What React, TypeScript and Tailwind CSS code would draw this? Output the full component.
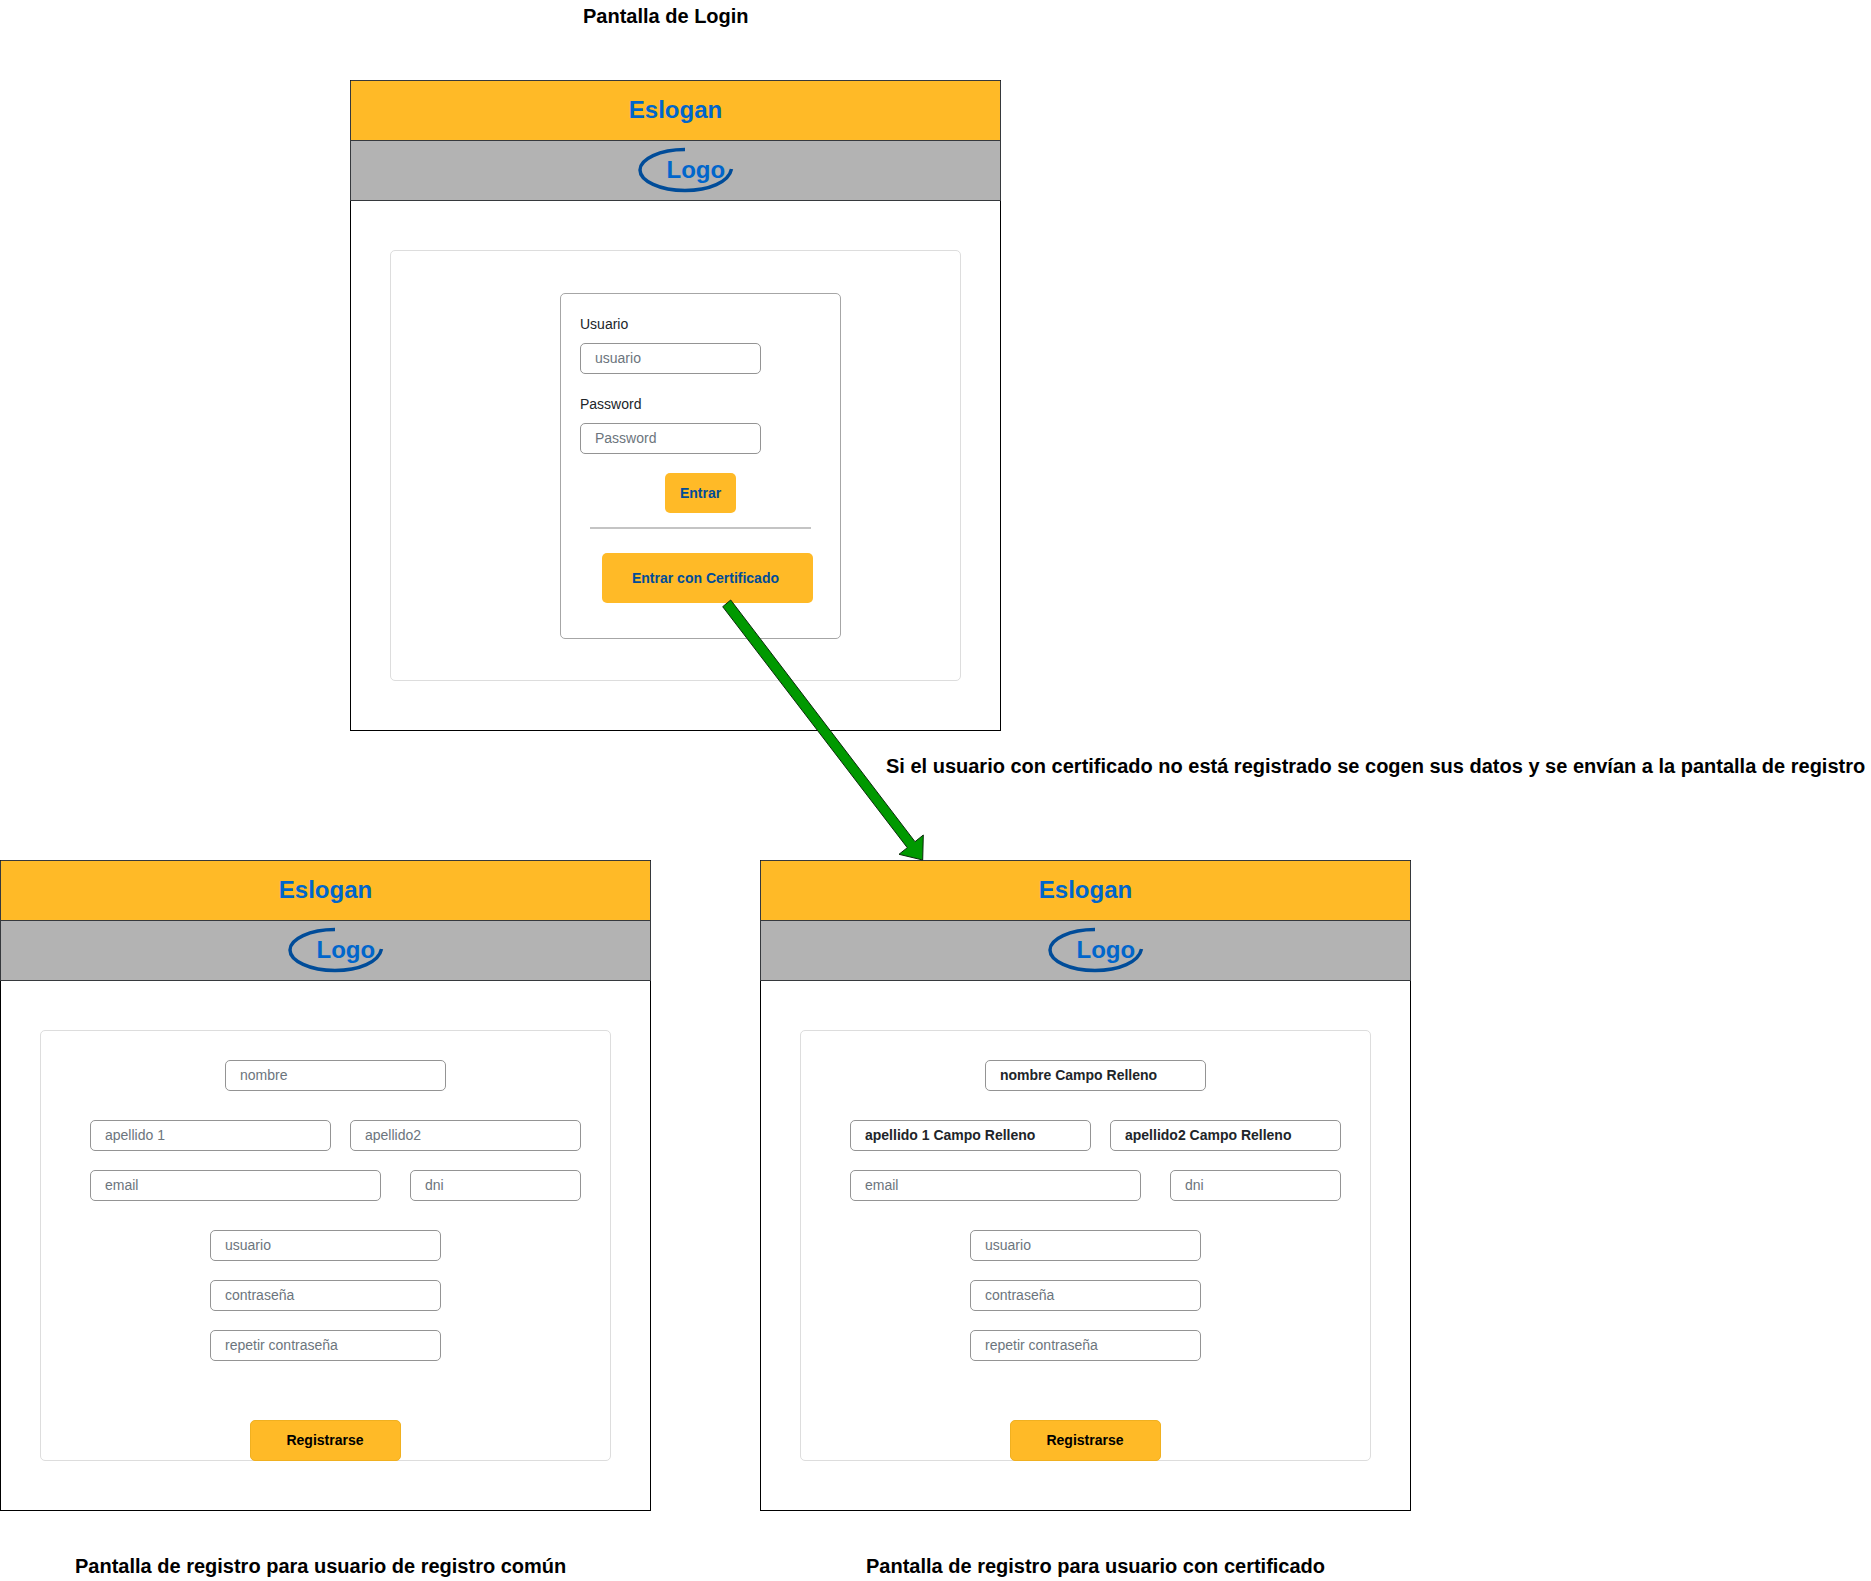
import React from "react";

const inputClass =
  "block h-[31px] box-border rounded-[5px] border border-[#949494] bg-white pl-[14px] pr-2 pb-[2px] text-[14px] leading-[21px] text-[#212529] font-bold outline-none placeholder:font-normal placeholder:text-[#6c757d]";

function Field({ w, placeholder, value }: { w: string; placeholder?: string; value?: string }) {
  return <input readOnly className={`${inputClass} ${w}`} placeholder={placeholder} defaultValue={value} />;
}

function Logo() {
  return (
    <div className="relative flex h-full w-[120px] items-center pb-[2px]">
      <svg className="absolute left-0 top-0 h-[59px] w-[120px]" viewBox="0 0 120 59" fill="none">
        <path d="M 52 8.5 C 27 8.5 7 18 7 29 C 7 40 27 49.5 52 49.5 C 76 49.5 96 41 98.5 28" stroke="#004c99" strokeWidth="3.5" />
      </svg>
      <span className="relative ml-[34px] text-[24px] font-bold leading-none text-[#0066cc]">Logo</span>
    </div>
  );
}

function Card({ children }: { children: React.ReactNode }) {
  return (
    <div className="box-border h-[651px] w-[651px] border border-black border-t-[#36393d] bg-white">
      <div className="-mx-px box-border flex h-[60px] items-center justify-center border-x border-b border-[#36393d] bg-[#ffba27] pb-[2px] text-[24px] font-bold text-[#0066cc]">
        Eslogan
      </div>
      <div className="-mx-px box-border flex h-[60px] justify-center border-x border-b border-[#36393d] bg-[#b3b3b3] pl-[34px]">
        <Logo />
      </div>
      <div className="ml-[39px] mt-[49px] box-border h-[431px] w-[571px] rounded-[5px] border border-[#dddddd]">
        {children}
      </div>
    </div>
  );
}

function LoginForm() {
  return (
    <div className="ml-[169px] mt-[42px] box-border h-[346px] w-[281px] rounded-[5px] border border-[#a6a6a6] pl-[19px] pt-[20px]">
      <div className="mb-[8px] text-[14px] leading-[21px] text-[#212529]">Usuario</div>
      <Field w="w-[181px]" placeholder="usuario" />
      <div className="mb-[8px] mt-[20px] text-[14px] leading-[21px] text-[#212529]">Password</div>
      <Field w="w-[181px]" placeholder="Password" />
      <div className="ml-[85px] mt-[19px] flex h-[40px] w-[71px] items-center justify-center rounded-[5px] bg-[#ffba27] text-[14px] font-bold text-[#004c99]">
        Entrar
      </div>
      <div className="ml-[10px] mt-[14px] h-[2px] w-[221px] bg-[#c4c4c4]" />
      <div className="ml-[22px] mt-[24px] flex h-[50px] w-[211px] items-center justify-center rounded-[5px] bg-[#ffba27] pr-[4px] text-[14px] font-bold text-[#004c99]">
        Entrar con Certificado
      </div>
    </div>
  );
}

function RegisterForm({ filled }: { filled?: boolean }) {
  return (
    <div className="pt-[29px]">
      <div className="ml-[184px]">
        <Field w="w-[221px]" placeholder="nombre" value={filled ? "nombre Campo Relleno" : undefined} />
      </div>
      <div className="ml-[49px] mt-[29px] flex gap-[19px]">
        <Field w="w-[241px]" placeholder="apellido 1" value={filled ? "apellido 1 Campo Relleno" : undefined} />
        <Field w="w-[231px]" placeholder="apellido2" value={filled ? "apellido2 Campo Relleno" : undefined} />
      </div>
      <div className="ml-[49px] mt-[19px] flex gap-[29px]">
        <Field w="w-[291px]" placeholder="email" />
        <Field w="w-[171px]" placeholder="dni" />
      </div>
      <div className="ml-[169px] mt-[29px] flex flex-col gap-[19px]">
        <Field w="w-[231px]" placeholder="usuario" />
        <Field w="w-[231px]" placeholder="contraseña" />
        <Field w="w-[231px]" placeholder="repetir contraseña" />
      </div>
      <div className="ml-[209px] mt-[59px] flex h-[41px] w-[151px] items-center justify-center rounded-[5px] border border-[#f0b020] bg-[#ffba27] pr-px text-[14px] font-bold text-black">
        Registrarse
      </div>
    </div>
  );
}

export default function App() {
  return (
    <div className="relative h-[1581px] w-[1871px] overflow-hidden bg-white font-['Liberation_Sans',Arial,sans-serif] text-black">
      <div className="h-[80px] pl-[583px] pt-[4px] text-[20px] font-bold leading-[24px]">Pantalla de Login</div>
      <div className="ml-[350px]">
        <Card>
          <LoginForm />
        </Card>
      </div>
      <div className="h-[129px] pl-[886px] pt-[23px] text-[20px] font-bold leading-[24px]">
        Si el usuario con certificado no está registrado se cogen sus datos y se envían a la pantalla de registro
      </div>
      <div className="flex gap-[109px]">
        <Card>
          <RegisterForm />
        </Card>
        <Card>
          <RegisterForm filled />
        </Card>
      </div>
      <div className="mt-[43px] flex text-[20px] font-bold leading-[24px]">
        <div className="ml-[75px] w-[791px]">Pantalla de registro para usuario de registro común</div>
        <div>Pantalla de registro para usuario con certificado</div>
      </div>
      <svg className="pointer-events-none absolute left-0 top-0 h-[1581px] w-[1871px]" viewBox="0 0 1871 1581">
        <polygon
          points="730.7,600 915,841.7 923.3,835 922.7,860 899,854.3 907.3,847.7 722.7,606.7"
          fill="#009900"
          stroke="#0b2a0b"
          strokeWidth="1"
        />
      </svg>
    </div>
  );
}
